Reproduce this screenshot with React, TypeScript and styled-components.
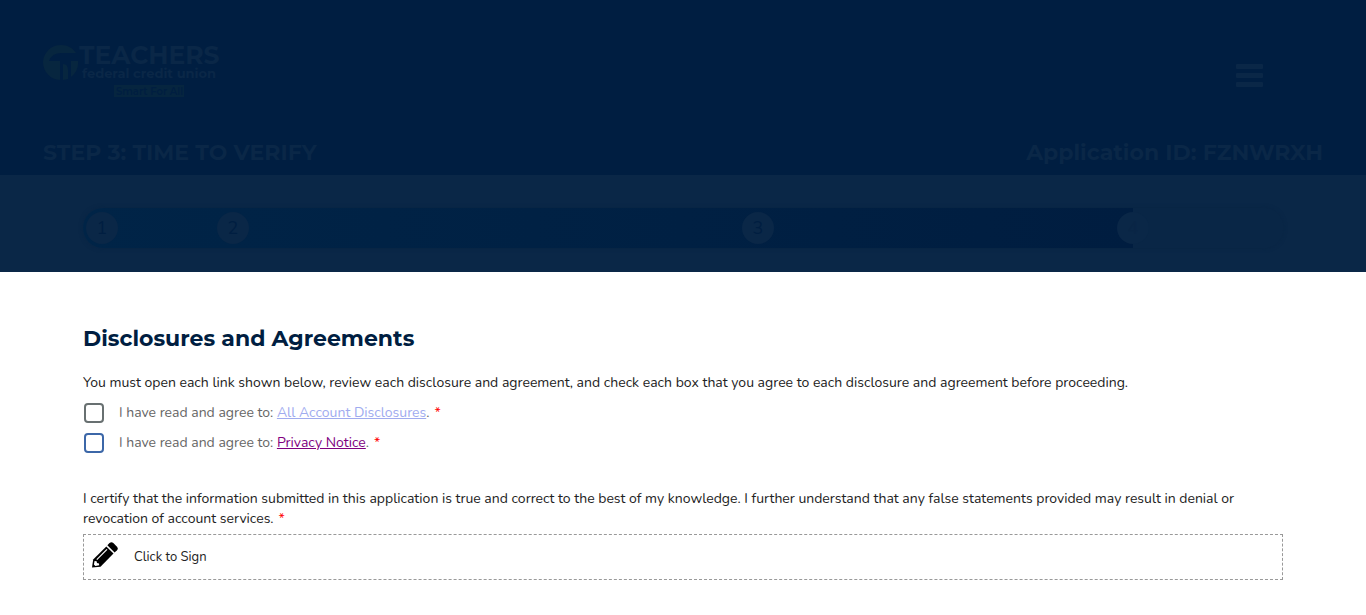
import React from "react";
import styled, { createGlobalStyle } from "styled-components";

const navy = "#001e41";
const slate = "#0a2747";
const bodyFont = `Nunito, "Open Sans", "Noto Sans", sans-serif`;
const headingFont = `Montserrat, Inter, "Open Sans", sans-serif`;

const GlobalStyle = createGlobalStyle`
  *, *::before, *::after { box-sizing: border-box; }
  body {
    margin: 0;
    background: #fff;
    color: #222;
    font-family: ${bodyFont};
    font-size: 14px;
    font-weight: 370;
    line-height: 20px;
  }
  h1, h2, p { margin: 0; }
`;

const Header = styled.header`
  display: flex;
  flex-direction: column;
  justify-content: space-between;
  min-height: 175px;
  padding: 40px 43px 7px;
  background: ${navy};
  color: ${slate};
`;

const HeaderRow = styled.div`
  display: flex;
  align-items: center;
  justify-content: space-between;
`;

const LogoLink = styled.a`
  display: block;
  line-height: 0;
`;

const MenuButton = styled.button`
  display: flex;
  flex-direction: column;
  gap: 4px;
  margin: 10px 60px 0 0;
  padding: 0;
  border: 0;
  background: none;
`;

const MenuBar = styled.span`
  width: 27px;
  height: 5px;
  border-radius: 1px;
  background: ${slate};
`;

const StepTitle = styled.h1`
  font: 700 22px/30px ${headingFont};
`;

const ApplicationId = styled.p`
  font: 700 22px/30px ${headingFont};
`;

const ProgressBand = styled.section`
  padding: 33px 24px 24px;
  background: ${slate};
`;

const Track = styled.div`
  max-width: 1200px;
  margin: 0 auto;
  border-radius: 20px;
  background: linear-gradient(90deg, #002447, #001d40 87.5%, #092646 87.5%);
  box-shadow: 0 0 4px #082443;
`;

const Steps = styled.ol`
  display: grid;
  grid-template-columns: 12.5fr 43.75fr 31.25fr 12.5fr;
  align-items: center;
  height: 40px;
  margin: 0;
  padding: 0;
  list-style: none;
`;

const Step = styled.li<{ $first?: boolean; $current?: boolean }>`
  width: 32px;
  height: 32px;
  margin-left: ${(p) => (p.$first ? "3px" : "-16px")};
  border-radius: 50%;
  background: ${slate};
  color: ${(p) => (p.$current ? "#092545" : "#001e41")};
  font-size: 18px;
  font-weight: 400;
  line-height: 32px;
  text-align: center;
`;

const Content = styled.main`
  max-width: 1248px;
  margin: 0 auto;
  padding: 51px 24px 32px;
`;

const SectionTitle = styled.h2`
  margin-bottom: 18px;
  color: #001e41;
  font: 700 22px/32px ${headingFont};
`;

const CheckRow = styled.div`
  display: flex;
  align-items: center;
  gap: 15px;
  height: 20px;
  margin-top: 10px;
  color: #666;
`;

const Checkbox = styled.input<{ $color: string }>`
  appearance: none;
  flex: none;
  width: 20px;
  height: 20px;
  margin: 0 0 0 1px;
  border: 2px solid ${(p) => p.$color};
  border-radius: 4px;
  background: #fff;
`;

const DocLink = styled.a<{ $color: string }>`
  color: ${(p) => p.$color};
`;

const Required = styled.span`
  margin-left: 5px;
  color: #f00;
`;

const Certification = styled.p`
  margin-top: 36px;
`;

const SignButton = styled.button`
  display: flex;
  align-items: center;
  gap: 16px;
  width: 100%;
  height: 46px;
  margin-top: 5px;
  padding: 0 8px;
  border: 1px dashed #999;
  background: #fff;
  color: #222;
  font: 370 13px/20px ${bodyFont};
  text-align: left;
`;

const PencilIcon = styled.svg`
  width: 26px;
  height: 26px;
  margin-bottom: 4px;
`;

function Pencil() {
  return (
    <PencilIcon viewBox="0 0 26 26" aria-hidden="true">
      <path d="M17.5 1Q19.500 -0.600 21.300 1L25 4.700Q26.500 6.500 25 8.300L22.600 10.400L15.400 3.300Z" />
      <path d="M14.300 4.400L21.500 11.500L8.500 24.700L0 25.500L1.200 17.500Z" />
      <path d="M4.800 17.600L15 7.400" stroke="#fff" strokeWidth="1.200" />
      <path d="M2.600 19L4.600 19.200L5 21L7 21.400L7.200 23.200L3.400 24L1.900 22.600Z" fill="#fff" />
    </PencilIcon>
  );
}

function Logo() {
  return (
    <svg width="180" height="60" viewBox="0 0 180 60" role="img" aria-label="Teachers Federal Credit Union">
      <path
        fill="#07263f"
        d="M0 22A18 18 0 0 1 33 13H18Q9 13 6 21H17V40A18 18 0 0 1 0 22ZM20 40V24Q25 24 25 30V39ZM28 37V21H35A18 18 0 0 1 28 37Z"
      />
      <g fill={slate} fontFamily={headingFont} fontWeight="700">
        <text x="36" y="24" fontSize="25">TEACHERS</text>
        <text x="39" y="38" fontSize="13">federal credit union</text>
      </g>
      <rect x="71" y="45" width="70" height="12" fill="#06253f" />
      <text x="73" y="55" fontFamily={headingFont} fontSize="10" fontWeight="600" fill={navy}>Smart For All</text>
    </svg>
  );
}

const disclosures = [
  { id: "account", title: "All Account Disclosures", box: "#687071", link: "#a0abef" },
  { id: "privacy", title: "Privacy Notice", box: "#3c67a8", link: "#800080" },
];

export default function App() {
  return (
    <>
      <GlobalStyle />
      <Header>
        <HeaderRow>
          <LogoLink href="#home">
            <Logo />
          </LogoLink>
          <MenuButton type="button" aria-label="Menu">
            <MenuBar />
            <MenuBar />
            <MenuBar />
          </MenuButton>
        </HeaderRow>
        <HeaderRow>
          <StepTitle>STEP 3: TIME TO VERIFY</StepTitle>
          <ApplicationId>Application ID: FZNWRXH</ApplicationId>
        </HeaderRow>
      </Header>
      <ProgressBand aria-label="Progress">
        <Track>
          <Steps>
            <Step $first>1</Step>
            <Step>2</Step>
            <Step>3</Step>
            <Step $current>4</Step>
          </Steps>
        </Track>
      </ProgressBand>
      <Content>
        <SectionTitle>Disclosures and Agreements</SectionTitle>
        <p>
          You must open each link shown below, review each disclosure and agreement, and check each box that you
          agree to each disclosure and agreement before proceeding.
        </p>
        {disclosures.map((d) => (
          <CheckRow key={d.id}>
            <Checkbox type="checkbox" id={d.id} $color={d.box} />
            <label htmlFor={d.id}>
              I have read and agree to:{" "}
              <DocLink href={`#${d.id}`} $color={d.link}>{d.title}</DocLink>.
              <Required>*</Required>
            </label>
          </CheckRow>
        ))}
        <Certification>
          I certify that the information submitted in this application is true and correct to the best of my
          knowledge. I further understand that any false statements provided may result in denial or revocation of
          account services.
          <Required>*</Required>
        </Certification>
        <SignButton type="button">
          <Pencil />
          Click to Sign
        </SignButton>
      </Content>
    </>
  );
}
